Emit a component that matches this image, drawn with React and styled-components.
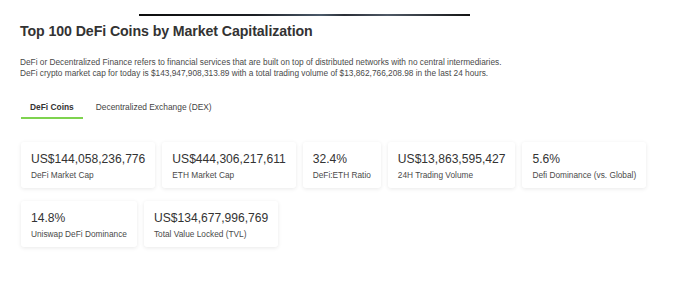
import React, { useState } from "react";
import styled, { createGlobalStyle } from "styled-components";

const GlobalStyle = createGlobalStyle`
  body {
    margin: 0;
    background: #fff;
    font-family: "Liberation Sans", Arial, sans-serif;
  }
`;

const stats = [
  [
    { value: "US$144,058,236,776", label: "DeFi Market Cap" },
    { value: "US$444,306,217,611", label: "ETH Market Cap" },
    { value: "32.4%", label: "DeFi:ETH Ratio" },
    { value: "US$13,863,595,427", label: "24H Trading Volume" },
    { value: "5.6%", label: "Defi Dominance (vs. Global)" },
  ],
  [
    { value: "14.8%", label: "Uniswap DeFi Dominance" },
    { value: "US$134,677,996,769", label: "Total Value Locked (TVL)" },
  ],
];

const App = () => {
  const [tab, setTab] = useState(0);
  const tabs = ["DeFi Coins", "Decentralized Exchange (DEX)"];

  return (
    <Page>
      <GlobalStyle />
      <TopStrip>
        <Rule />
      </TopStrip>
      <Title>Top 100 DeFi Coins by Market Capitalization</Title>
      <Intro>
        DeFi or Decentralized Finance refers to financial services that are
        built on top of distributed networks with no central intermediaries.
        <br />
        DeFi crypto market cap for today is $143,947,908,313.89 with a total
        trading volume of $13,862,766,208.98 in the last 24 hours.
      </Intro>
      <Tabs>
        {tabs.map((t, i) => (
          <Tab key={t} active={i === tab} onClick={() => setTab(i)}>
            {t}
          </Tab>
        ))}
      </Tabs>
      <Cards>
        {stats.map((row, r) => (
          <CardRow key={r}>
            {row.map((s) => (
              <Card key={s.label}>
                <Value>{s.value}</Value>
                <Label>{s.label}</Label>
              </Card>
            ))}
          </CardRow>
        ))}
      </Cards>
    </Page>
  );
};

const Page = styled.div`
  width: 682px;
  height: 282px;
  overflow: hidden;
  padding: 0 0 0 20px;
  box-sizing: border-box;
`;

const TopStrip = styled.div`
  display: flex;
  padding: 14px 0 0 119px;
  height: 2px;
`;

const Rule = styled.div`
  width: 331px;
  height: 2px;
  background: linear-gradient(
    90deg,
    #0d0d0d 0%,
    #1c1f24 35%,
    #4b5a6a 55%,
    #2a2e36 62%,
    #4f5966 75%,
    #141414 100%
  );
`;

const Title = styled.h1`
  margin: 6px 0 0;
  font-size: 14.2px;
  line-height: 18px;
  font-weight: 700;
  color: #333;
  letter-spacing: -0.1px;
`;

const Intro = styled.p`
  margin: 17px 0 0;
  font-size: 8.3px;
  line-height: 11px;
  color: #4a4a4a;
`;

const Tabs = styled.div`
  display: flex;
  gap: 4px;
  margin-top: 22px;
  padding-left: 1px;
`;

const Tab = styled.div`
  padding: 0 9px 4px;
  font-size: 8.4px;
  line-height: 12px;
  font-weight: ${({ active }) => (active ? 700 : 400)};
  color: ${({ active }) => (active ? "#333" : "#444")};
  border-bottom: 2px solid ${({ active }) => (active ? "#7ed34f" : "transparent")};
  cursor: pointer;
`;

const Cards = styled.div`
  display: flex;
  flex-direction: column;
  gap: 13px;
  margin-top: 23px;
  padding-left: 1px;
`;

const CardRow = styled.div`
  display: flex;
  gap: 7px;
`;

const Card = styled.div`
  background: #fff;
  border-radius: 3px;
  padding: 10px 10px 9px;
  box-shadow: 0 1px 4px rgba(0, 0, 0, 0.09);
  height: 46px;
  box-sizing: border-box;
`;

const Value = styled.div`
  font-size: 12.1px;
  line-height: 14px;
  color: #333;
  white-space: nowrap;
`;

const Label = styled.div`
  margin-top: 4px;
  font-size: 8.3px;
  line-height: 10px;
  color: #4a4a4a;
  white-space: nowrap;
`;

export default App;
